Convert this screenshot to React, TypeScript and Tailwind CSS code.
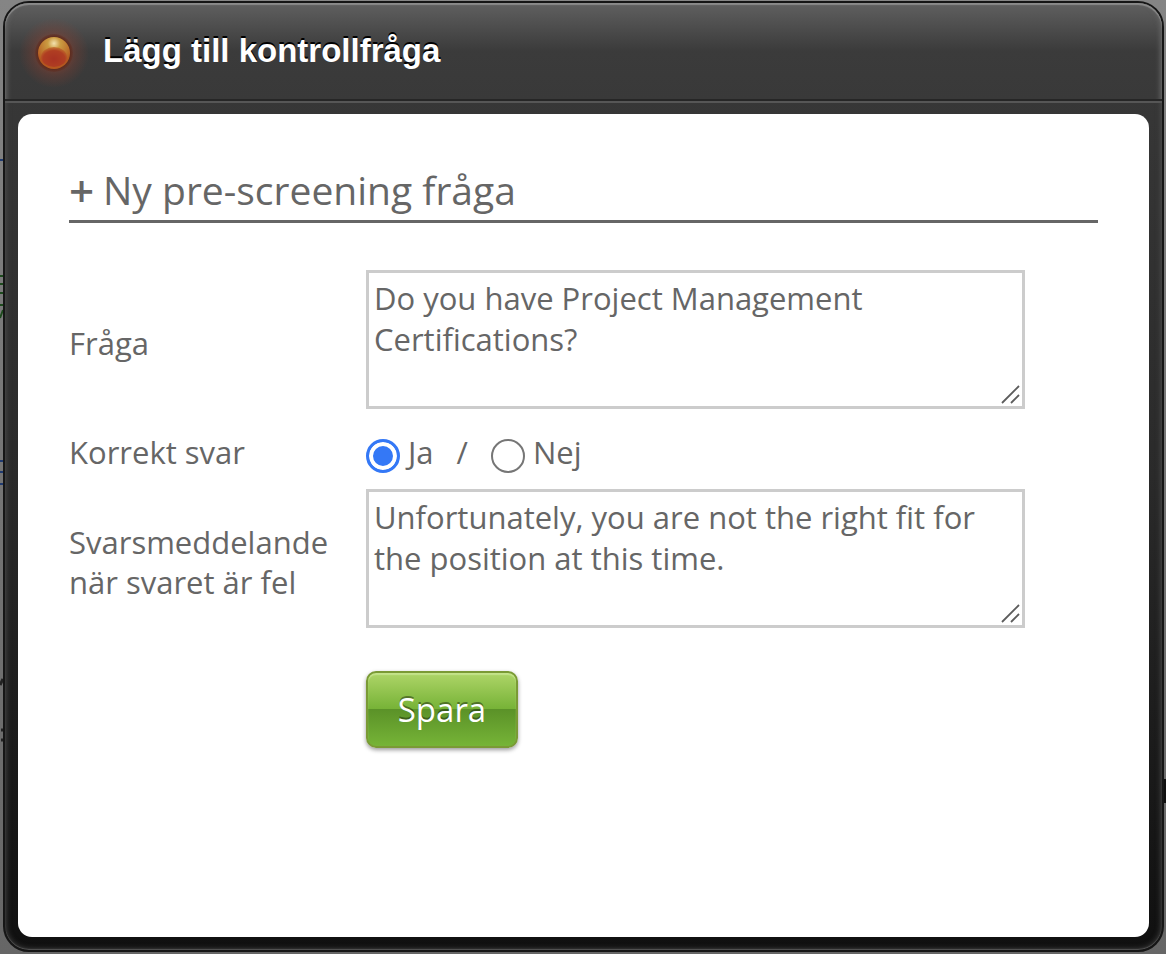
import React, { useState } from "react";

const textareaClass =
  "block w-full h-[139px] resize-none border-3 border-[#cccccc] bg-white px-[5px] pt-[5px] text-[31px] leading-[41px] text-[#666666] outline-none";

const radioClass =
  "relative top-1 size-[34px] shrink-0 appearance-none rounded-full border-2 border-[#767676] bg-white checked:border-3 checked:border-[#3478f6] checked:bg-[#3478f6] checked:shadow-[inset_0_0_0_4px_#ffffff]";

function StatusLamp() {
  return (
    <svg className="mt-1 size-[72px] shrink-0" viewBox="0 0 72 72" aria-hidden="true">
      <defs>
        <radialGradient id="lampGlow">
          <stop offset="0.4" stopColor="#a0442f" stopOpacity="0.5" />
          <stop offset="0.65" stopColor="#8a3f30" stopOpacity="0.3" />
          <stop offset="1" stopColor="#8a3f30" stopOpacity="0" />
        </radialGradient>
        <radialGradient id="lampRim">
          <stop offset="0.8" stopColor="#5c281a" />
          <stop offset="1" stopColor="#5c281a" stopOpacity="0.3" />
        </radialGradient>
        <radialGradient id="lampShine" cx="0.5" cy="0.2" r="0.65">
          <stop offset="0" stopColor="#f3e2ae" />
          <stop offset="0.3" stopColor="#cb9c42" />
          <stop offset="1" stopColor="#b4581f" />
        </radialGradient>
        <radialGradient id="lampCore" cx="0.5" cy="0.6" r="0.6">
          <stop offset="0" stopColor="#a83222" />
          <stop offset="0.7" stopColor="#b03e22" />
          <stop offset="1" stopColor="#bf6428" stopOpacity="0.7" />
        </radialGradient>
      </defs>
      <circle cx="37" cy="36" r="35" fill="url(#lampGlow)" />
      <circle cx="37" cy="36" r="19" fill="url(#lampRim)" />
      <circle cx="37" cy="36" r="16" fill="url(#lampShine)" />
      <ellipse cx="37" cy="40" rx="13" ry="10" fill="url(#lampCore)" />
    </svg>
  );
}

function ResizeGrip() {
  return (
    <svg
      className="pointer-events-none absolute right-1 bottom-1 size-5"
      viewBox="0 0 20 20"
      stroke="#5c5c5c"
      strokeWidth="1.8"
      aria-hidden="true"
    >
      <path d="M1 18 18 1M10 18l8-8" />
    </svg>
  );
}

// Bits of the dimmed page that show beside the dialog
function Backdrop() {
  return (
    <>
      <svg className="absolute top-0 left-0 h-[800px] w-[3px]" viewBox="0 0 3 800" aria-hidden="true">
        <path d="M0 160h3M0 461h3M0 472h3M0 484h3" stroke="#1f3a70" strokeWidth="2" />
        <path d="M0 276h3M0 284h3M0 293h3M0 305h3M0 318l3-8" stroke="#1c4a1c" strokeWidth="2" />
        <path d="M0 685l3-6M1 730h2M1 740h2" stroke="#222222" strokeWidth="3" />
      </svg>
      <div className="absolute top-[779px] right-0 h-6 w-0.5 bg-[#101010]" />
    </>
  );
}

export default function App() {
  const [question, setQuestion] = useState("Do you have Project Management Certifications?");
  const [answer, setAnswer] = useState("yes");
  const [message, setMessage] = useState(
    "Unfortunately, you are not the right fit for the position at this time."
  );

  return (
    <div className="relative flex min-h-screen bg-linear-to-b from-[#858585] to-[#666666] pt-px pr-0.5 pb-0.5 pl-[3px] font-['Open_Sans',sans-serif] text-[#666666]">
      <Backdrop />

      {/* Dialog */}
      <div
        role="dialog"
        aria-labelledby="dialog-title"
        className="flex flex-1 flex-col rounded-[26px] border-2 border-[#161616] bg-linear-to-b from-[#3a3a3a] via-[#2a2a2a] to-[#101010] shadow-[inset_0_-1px_1px_#555555,inset_0_0_6px_#555555]"
      >
        {/* Title bar */}
        <header className="flex h-[98px] items-center rounded-t-3xl border-b-2 border-[#262626] bg-linear-to-b from-[#606060] via-[#3b3b3b] to-[#393939] pl-3 shadow-[inset_0_2px_1px_#8a8a8a,inset_7px_0_5px_-5px_#666666,inset_-7px_0_5px_-5px_#666666,0_2px_0_#565656]">
          <StatusLamp />
          <h1
            id="dialog-title"
            className="ml-[14px] font-['Liberation_Sans',Arial,sans-serif] text-[33px] leading-10 font-bold text-white [text-shadow:0_-2px_0_#000000]"
          >
            Lägg till kontrollfråga
          </h1>
        </header>

        {/* Content */}
        <main className="mx-[13px] mt-[13px] mb-[13px] flex-1 rounded-[14px] bg-white px-[51px] pt-[50px]">
          <h2 className="flex items-center border-b-3 border-[#666666] pb-1 text-[39px] leading-[52px]">
            <span className="mr-2 w-[26px] text-[44px] font-semibold">+</span>
            Ny pre-screening fråga
          </h2>

          <form
            className="mt-[47px] grid grid-cols-[297px_1fr] items-center pr-[73px] text-[31px] leading-10"
            onSubmit={(e) => e.preventDefault()}
          >
            <label htmlFor="question" className="pt-1.5">Fråga</label>
            <div className="relative">
              <textarea
                id="question"
                className={textareaClass}
                value={question}
                onChange={(e) => setQuestion(e.target.value)}
              />
              <ResizeGrip />
            </div>

            <span id="answer-label" className="pt-1.5">Korrekt svar</span>
            <div role="radiogroup" aria-labelledby="answer-label" className="flex h-20 items-center pt-1.5">
              <input
                id="yes"
                type="radio"
                name="answer"
                className={radioClass}
                checked={answer === "yes"}
                onChange={() => setAnswer("yes")}
              />
              <label htmlFor="yes" className="ml-2">Ja</label>
              <span className="mx-[23px]">/</span>
              <input
                id="no"
                type="radio"
                name="answer"
                className={radioClass}
                checked={answer === "no"}
                onChange={() => setAnswer("no")}
              />
              <label htmlFor="no" className="ml-2">Nej</label>
            </div>

            <label htmlFor="message" className="pt-1.5">Svarsmeddelande när svaret är fel</label>
            <div className="relative">
              <textarea
                id="message"
                className={textareaClass}
                value={message}
                onChange={(e) => setMessage(e.target.value)}
              />
              <ResizeGrip />
            </div>

            <button
              type="submit"
              className="col-start-2 mt-[43px] h-[77px] w-[152px] rounded-[10px] border-2 border-[#7a9a35] bg-[linear-gradient(#aed568,#76b236_50%,#5b9228_50%,#76b437)] text-[33px] leading-none text-white shadow-[0_2px_4px_#00000066,inset_0_2px_1px_#c3e38a] [text-shadow:0_-2px_0_#00000066]"
            >
              Spara
            </button>
          </form>
        </main>
      </div>
    </div>
  );
}
